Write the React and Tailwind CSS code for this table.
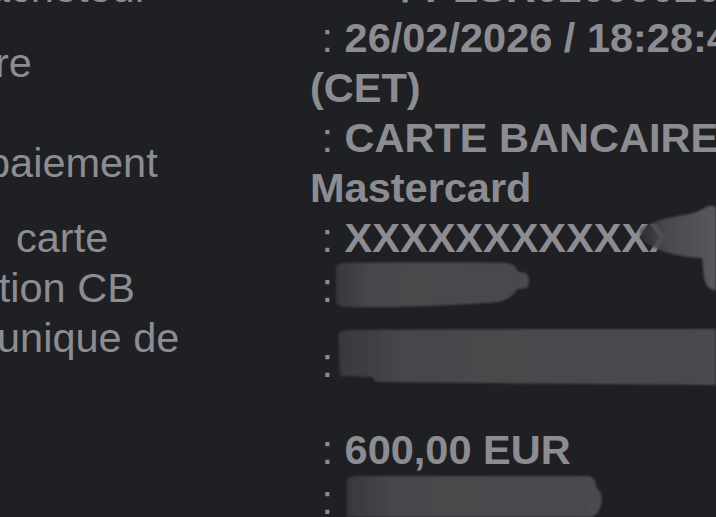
import React from "react";

function Colon() {
  return <span className="font-normal">{"\u00a0:\u00a0"}</span>;
}

function Row({ left, right, className = "" }) {
  return (
    <div className={"grid grid-cols-[310px_1fr] items-center " + className}>
      <div className="overflow-hidden whitespace-nowrap">{left}</div>
      <div className="whitespace-nowrap font-bold">{right}</div>
    </div>
  );
}

function Blobs() {
  return (
    <svg className="pointer-events-none absolute inset-0" width="716" height="517" viewBox="0 0 716 517">
      <defs>
        <linearGradient id="gA" x1="0" y1="0" x2="1" y2="0">
          <stop offset="0" stopColor="#38383c" />
          <stop offset="0.18" stopColor="#47474b" />
          <stop offset="1" stopColor="#4b4b4f" />
        </linearGradient>
        <linearGradient id="gD" x1="0" y1="0" x2="1" y2="0">
          <stop offset="0" stopColor="#3a3a3e" stopOpacity="0.6" />
          <stop offset="0.35" stopColor="#4a4a4e" />
          <stop offset="1" stopColor="#58585c" />
        </linearGradient>
        <filter id="soft" x="-5%" y="-20%" width="110%" height="140%">
          <feGaussianBlur stdDeviation="0.8" />
        </filter>
      </defs>
      <g filter="url(#soft)">
        <path
          d="M336,266 Q337,263 345,263 C400,262 470,262 508,263 Q516,265 518,272 L526,273 Q532,279 527,288 L517,289 Q512,299 498,302 C460,305 400,308 345,307 Q337,306 336,302 Z"
          fill="url(#gA)"
        />
        <path
          d="M338,334 Q340,330 352,330 C450,329 600,329 716,329 L716,385 L600,384 L376,382 L372,377 L340,376 Z"
          fill="url(#gA)"
        />
        <path
          d="M347,479 Q348,476 360,476 L588,476 Q597,478 596,487 Q604,494 601,505 Q599,514 592,517 L347,517 Z"
          fill="url(#gA)"
        />
        <path
          d="M640,229 Q652,220 684,215 Q700,212 706,207 Q714,204 716,208 L716,290 Q707,291 704,278 L702,258 Q680,257 662,251 Q648,246 640,237 Z"
          fill="url(#gD)"
        />
      </g>
    </svg>
  );
}

export default function App() {
  return (
    <div className="relative h-[517px] w-[716px] overflow-hidden bg-[#1f2024] font-['Liberation_Sans',Arial,sans-serif] text-[41.5px] leading-[50px] text-[#8d8d91]">
      <div className="-mt-[37px] flex flex-col">
        <Row
          left={<div className="-ml-[13px]">acheteur</div>}
          right={<div className="pl-[92px]">/ PLSR02000020L</div>}
        />
        <Row
          left={<div className="-ml-[5px]">re</div>}
          right={
            <>
              <div>
                <Colon />
                26/02/2026 / 18:28:45
              </div>
              <div>(CET)</div>
            </>
          }
        />
        <Row
          left={<div className="-ml-[13px]">paiement</div>}
          right={
            <>
              <div>
                <Colon />
                CARTE BANCAIRE
              </div>
              <div>Mastercard</div>
            </>
          }
        />
        <Row
          left={<div className="ml-[16px]">carte</div>}
          right={
            <div>
              <Colon />
              XXXXXXXXXXXX
            </div>
          }
        />
        <Row
          left={<div className="-ml-[22px]">ction CB</div>}
          right={
            <div>
              <Colon />
            </div>
          }
        />
        <Row
          left={
            <>
              <div className="-ml-[3px]">unique de</div>
              <div>{"\u00a0"}</div>
            </>
          }
          right={
            <div>
              <Colon />
            </div>
          }
        />
        <Row
          className="mt-[12px]"
          left={<div>{"\u00a0"}</div>}
          right={
            <div>
              <Colon />
              600,00 EUR
            </div>
          }
        />
        <Row
          left={<div>{"\u00a0"}</div>}
          right={
            <div>
              <Colon />
            </div>
          }
        />
      </div>
      <Blobs />
    </div>
  );
}
